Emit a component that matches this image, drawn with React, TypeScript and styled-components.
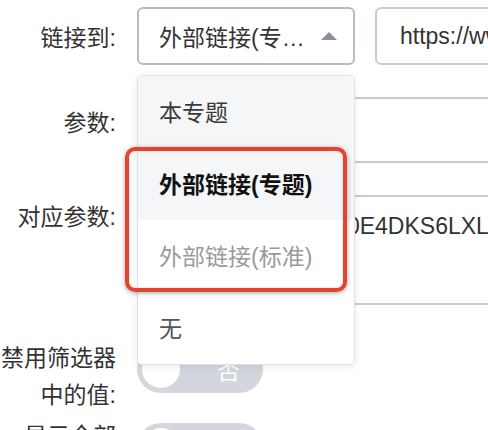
import React from "react";
import styled, { createGlobalStyle } from "styled-components";

const Global = createGlobalStyle`
  html, body { margin: 0; padding: 0; background: #fff; }
  body { width: 488px; height: 430px; overflow: hidden; }
  * { box-sizing: border-box; }
`;

const FONT = `"Liberation Sans", "Noto Sans CJK SC", sans-serif`;

const Page = styled.div`
  position: relative;
  width: 488px;
  height: 430px;
  overflow: hidden;
  padding-top: 7px;
  font-family: ${FONT};
  font-size: 23px;
  color: #333;
`;

const Row = styled.div<{ $align?: string; $gap: number }>`
  display: grid;
  grid-template-columns: 116px 1fr;
  column-gap: 21px;
  align-items: ${(p) => p.$align || "center"};
  margin-bottom: ${(p) => p.$gap}px;
  width: 800px;
`;

const Label = styled.div<{ $lh?: number }>`
  text-align: right;
  white-space: ${(p) => (p.$lh ? "normal" : "nowrap")};
  line-height: ${(p) => (p.$lh ? p.$lh + "px" : "normal")};
  color: #333;
`;

const Controls = styled.div`
  display: flex;
  align-items: center;
  gap: 20px;
`;

const SelectBox = styled.div`
  width: 218px;
  height: 58px;
  border: 2px solid #b6bbc4;
  border-radius: 6px;
  display: flex;
  align-items: center;
  padding: 0 14px 0 20px;
  gap: 12px;
`;

const SelectText = styled.span`
  flex: 1;
  min-width: 0;
  overflow: hidden;
  white-space: nowrap;
  text-overflow: ellipsis;
  color: #333;
`;

const Arrow = styled.span`
  width: 0;
  height: 0;
  border-left: 8px solid transparent;
  border-right: 8px solid transparent;
  border-bottom: 8px solid #8a909b;
  margin-right: 2px;
`;

const Field = styled.div<{ $h: number; $w: number; $pt?: number }>`
  width: ${(p) => p.$w}px;
  height: ${(p) => p.$h}px;
  border: 2px solid #c8ccd3;
  border-radius: 6px;
  padding: ${(p) => (p.$pt ? `${p.$pt}px 0 0 23px` : "0 0 0 23px")};
  display: flex;
  align-items: ${(p) => (p.$pt ? "flex-start" : "center")};
  white-space: nowrap;
  overflow: hidden;
  color: #333;
`;

const Switch = styled.div`
  position: relative;
  width: 126px;
  height: 48px;
  border-radius: 24px;
  background: #d3d6dc;
  display: flex;
  align-items: center;
  padding-left: 5px;
  margin-top: 5px;
`;

const Knob = styled.span`
  width: 38px;
  height: 38px;
  border-radius: 50%;
  background: #fff;
`;

const SwitchText = styled.span`
  margin-left: 37px;
  color: #fff;
`;

const Dropdown = styled.ul`
  position: absolute;
  left: 137px;
  top: 75px;
  width: 218px;
  margin: 0;
  padding: 0;
  list-style: none;
  background: #fff;
  border: 1px solid #e0e2e7;
  border-radius: 5px;
  box-shadow: 0 2px 8px rgba(0, 0, 0, 0.08);
  overflow: hidden;
  z-index: 5;
`;

const Item = styled.li<{ $bg?: boolean; $color: string; $bold?: boolean }>`
  height: 72px;
  display: flex;
  align-items: center;
  padding-left: 21px;
  padding-bottom: 3px;
  background: ${(p) => (p.$bg ? "#f5f6f8" : "#fff")};
  color: ${(p) => p.$color};
  font-weight: ${(p) => (p.$bold ? 700 : 400)};
`;

const Highlight = styled.div`
  position: absolute;
  left: 125px;
  top: 147px;
  width: 222px;
  height: 145px;
  border: 4px solid #e4432e;
  border-radius: 10px;
  box-shadow: 0 1px 5px rgba(0, 0, 0, 0.35), inset 0 0 3px rgba(0, 0, 0, 0.15);
  z-index: 6;
`;

export default function App() {
  return (
    <>
      <Global />
      <Page>
        <Row $gap={32}>
          <Label>链接到:</Label>
          <Controls>
            <SelectBox>
              <SelectText>外部链接(专题)</SelectText>
              <Arrow />
            </SelectBox>
            <Field $h={58} $w={300}>https://www.example.com</Field>
          </Controls>
        </Row>
        <Row $gap={32} $align="start">
          <Label $lh={52}>参数:</Label>
          <Field $h={66} $w={600} />
        </Row>
        <Row $gap={35} $align="start">
          <Label $lh={44}>对应参数:</Label>
          <Field $h={110} $w={600} $pt={16}>
            XW9PQ7RT2C4N0E4DKS6LXLA
          </Field>
        </Row>
        <Row $gap={4} $align="start">
          <Label $lh={37}>禁用筛选器中的值:</Label>
          <Switch>
            <Knob />
            <SwitchText>否</SwitchText>
          </Switch>
        </Row>
        <Row $gap={0} $align="start">
          <Label $lh={37}>显示全部值:</Label>
          <Switch>
            <Knob />
            <SwitchText>否</SwitchText>
          </Switch>
        </Row>
        <Dropdown>
          <Item $bg $color="#3a3a3a">本专题</Item>
          <Item $bg $color="#111" $bold>外部链接(专题)</Item>
          <Item $color="#9a9a9a">外部链接(标准)</Item>
          <Item $color="#555">无</Item>
        </Dropdown>
        <Highlight />
      </Page>
    </>
  );
}
